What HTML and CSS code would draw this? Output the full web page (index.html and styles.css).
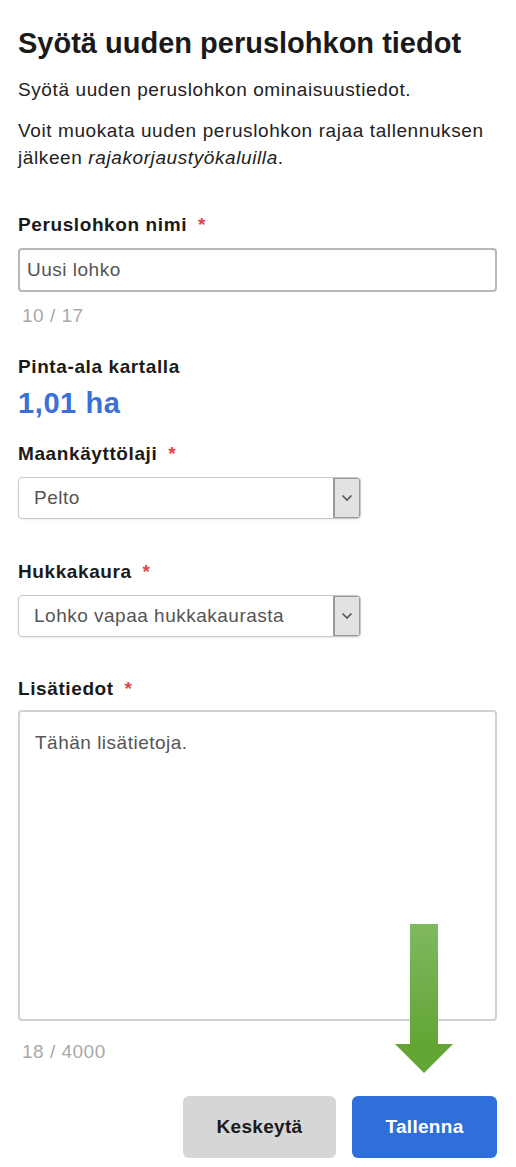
FILE: index.html
```html
<!DOCTYPE html>
<html lang="fi">
<head>
<meta charset="utf-8">
<link rel="stylesheet" href="styles.css">
</head>
<body>
<main class="page">
  <h1 class="title">Syötä uuden peruslohkon tiedot</h1>
  <p class="lead">Syötä uuden peruslohkon ominaisuustiedot.</p>
  <p class="info">Voit muokata uuden peruslohkon rajaa tallennuksen jälkeen <em>rajakorjaustyökaluilla</em>.</p>

  <div class="field field-name">
    <div class="label">Peruslohkon nimi <span class="req">*</span></div>
    <div class="input">Uusi lohko</div>
    <div class="counter">10 / 17</div>
  </div>

  <div class="field field-area">
    <div class="label">Pinta-ala kartalla</div>
    <div class="area">1,01 ha</div>
  </div>

  <div class="field field-select">
    <div class="label">Maankäyttölaji <span class="req">*</span></div>
    <div class="select"><span class="select-text">Pelto</span><span class="select-btn"><svg width="12" height="8" viewBox="0 0 12 8"><path d="M1.5 1.5 L6 6 L10.5 1.5" fill="none" stroke="#555" stroke-width="1.6"/></svg></span></div>
  </div>

  <div class="field field-select">
    <div class="label">Hukkakaura <span class="req">*</span></div>
    <div class="select"><span class="select-text">Lohko vapaa hukkakaurasta</span><span class="select-btn"><svg width="12" height="8" viewBox="0 0 12 8"><path d="M1.5 1.5 L6 6 L10.5 1.5" fill="none" stroke="#555" stroke-width="1.6"/></svg></span></div>
  </div>

  <div class="field field-text">
    <div class="label">Lisätiedot <span class="req">*</span></div>
    <div class="textarea">Tähän lisätietoja.</div>
    <div class="counter counter-long">18 / 4000</div>
  </div>

  <div class="actions">
    <button class="btn btn-cancel">Keskeytä</button>
    <button class="btn btn-save">Tallenna</button>
    <div class="arrow">
      <div class="arrow-shaft"></div>
      <div class="arrow-head"></div>
    </div>
  </div>
</main>
</body>
</html>
```

FILE: styles.css
```css
* { box-sizing: border-box; }
html, body { margin: 0; padding: 0; background: #fff; }
body {
  font-family: "Liberation Sans", Arial, sans-serif;
  color: #222;
}
.page {
  width: 516px;
  padding: 26px 19px 0 18px;
}
.title {
  margin: 0;
  font-family: "Liberation Sans", Arial, sans-serif;
  font-weight: 700;
  font-size: 29px;
  line-height: 34px;
  color: #1a1a1a;
}
.lead {
  margin: 18px 0 0;
  font-size: 19px;
  letter-spacing: 0.6px;
  line-height: 24px;
  color: #222;
}
.info {
  margin: 15px 0 0;
  font-size: 19px;
  letter-spacing: 0.6px;
  line-height: 27px;
  color: #222;
}
.field { display: flex; flex-direction: column; }
.field-name { margin-top: 43px; }
.field-area { margin-top: 32px; }
.field-select { margin-top: 23px; }
.field-select + .field-select { margin-top: 42px; }
.field-text { margin-top: 41px; }
.label {
  font-family: "Liberation Sans", Arial, sans-serif;
  font-weight: 700;
  font-size: 19px;
  letter-spacing: 0.6px;
  line-height: 22px;
  color: #1a1a1a;
}
.req { color: #e0454d; margin-left: 5px; }
.input {
  margin-top: 12px;
  height: 44px;
  border: 2px solid #b8b8b8;
  border-radius: 4px;
  padding: 0 7px;
  display: flex;
  align-items: center;
  font-size: 19px;
  letter-spacing: 0.5px;
  color: #555;
}
.counter {
  margin-top: 16px;
  font-size: 19px;
  letter-spacing: 0.5px;
  line-height: 16px;
  color: #a9a9a9;
  padding-left: 4px;
}
.counter-long { margin-top: 23px; }
.area {
  margin-top: 8px;
  font-weight: 700;
  font-size: 29px;
  letter-spacing: 0.6px;
  line-height: 34px;
  color: #3a70d8;
}
.select {
  margin-top: 12px;
  width: 343px;
  height: 42px;
  border: 1px solid #c9c9c9;
  border-radius: 4px;
  display: flex;
  align-items: stretch;
  overflow: hidden;
  box-shadow: 0 1px 2px rgba(0,0,0,0.08);
}
.select-text {
  flex: 1;
  display: flex;
  align-items: center;
  padding-left: 15px;
  font-size: 19px;
  letter-spacing: 0.5px;
  color: #555;
}
.select-btn {
  width: 27px;
  background: #e2e2e2;
  border-left: 2px solid #9a9a9a;
  border-right: 1px solid #9a9a9a;
  border-top: 1px solid #9a9a9a;
  border-bottom: 1px solid #9a9a9a;
  display: flex;
  align-items: center;
  justify-content: center;
}
.textarea {
  margin-top: 10px;
  height: 311px;
  border: 2px solid #d2d2d2;
  border-radius: 4px;
  padding: 20px 15px;
  font-size: 19px;
  letter-spacing: 0.5px;
  color: #555;
}
.actions {
  position: relative;
  margin-top: 36px;
  display: flex;
  justify-content: flex-end;
  gap: 16px;
}
.btn {
  height: 62px;
  border: none;
  border-radius: 6px;
  font-family: "Liberation Sans", Arial, sans-serif;
  font-weight: 700;
  font-size: 19px;
  letter-spacing: 0.3px;
}
.btn-cancel { width: 153px; background: #d6d6d6; color: #1a1a1a; }
.btn-save { width: 145px; background: #2f6fdc; color: #fff; }
.arrow {
  position: absolute;
  left: 377px;
  top: -172px;
  width: 58px;
  height: 148px;
}
.arrow-shaft {
  position: absolute;
  left: 15px;
  top: 0;
  width: 28px;
  height: 122px;
  background: linear-gradient(#80b860, #62a535);
}
.arrow-head {
  position: absolute;
  left: 0;
  top: 120px;
  width: 0;
  height: 0;
  border-left: 29px solid transparent;
  border-right: 29px solid transparent;
  border-top: 29px solid #62a535;
}
```
